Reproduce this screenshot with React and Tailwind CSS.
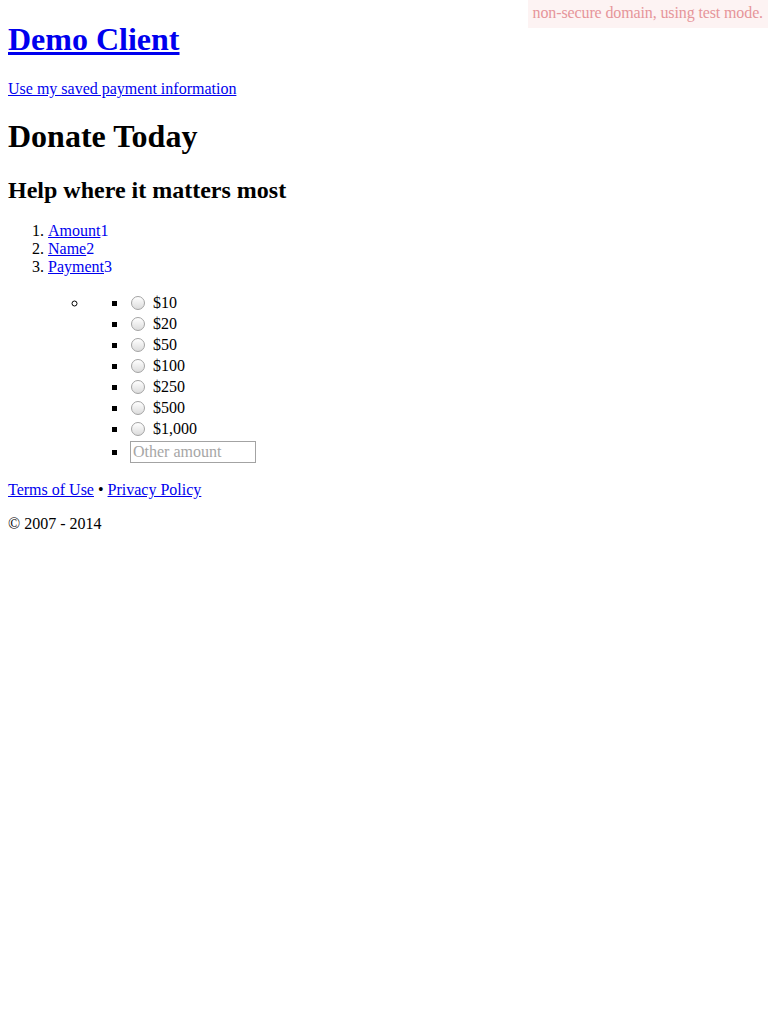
import React from "react";

const amounts = ["$10", "$20", "$50", "$100", "$250", "$500", "$1,000"];

function Radio() {
  return (
    <input
      type="radio"
      name="amount"
      className="appearance-none w-[14px] h-[14px] rounded-full border border-[#a3a3a3] bg-[linear-gradient(180deg,#ffffff,#dcdcdc)] mt-0 mr-[8px] ml-[3px] mb-0 align-[-2px] inline-block"
    />
  );
}

export default function App() {
  return (
    <div className="relative flow-root min-h-[1024px] bg-white text-black text-[16px] leading-[normal] font-['Liberation_Serif','Times_New_Roman',serif]">
      <div className="absolute top-0 right-0 bg-[#fdf3f3] text-[#e6959a] tracking-[-0.12px] pl-[5px] pr-[5px] pt-[4px] pb-[6px]">
        non-secure domain, using test mode.
      </div>
      <div className="mx-2">
        <h1 className="text-[32px] font-bold mt-[21.44px] mb-0">
          <a href="#" className="text-[#0000ee] underline">Demo Client</a>
        </h1>
        <p className="mt-[21.44px] mb-0">
          <a href="#" className="text-[#0000ee] underline">Use my saved payment information</a>
        </p>
        <h1 className="text-[32px] font-bold mt-[20.4px] mb-0">Donate Today</h1>
        <h2 className="text-[24px] font-bold mt-[21.5px] mb-0">Help where it matters most</h2>
        <ol className="list-decimal pl-10 mt-[17.9px] mb-0">
          <li>
            <a href="#" className="text-[#0000ee] underline">Amount</a>
            <span className="text-[#0000ee]">1</span>
          </li>
          <li>
            <a href="#" className="text-[#0000ee] underline">Name</a>
            <span className="text-[#0000ee]">2</span>
          </li>
          <li>
            <a href="#" className="text-[#0000ee] underline">Payment</a>
            <span className="text-[#0000ee]">3</span>
          </li>
        </ol>
        <div className="pl-10 mt-[16px] mb-0">
          <ul className="list-[circle] pl-10">
            <li className="leading-[21px]">
              <ul className="list-[square] pl-10">
                {amounts.map((a) => (
                  <li key={a} className="h-[21px] leading-[21px]">
                    <label>
                      <Radio />
                      {a}
                    </label>
                  </li>
                ))}
                <li className="h-[26px] leading-[21px] pt-[2px]">
                  <input
                    type="text"
                    placeholder="Other amount"
                    className="ml-[2px] w-[126px] h-[22px] align-top border border-[#a3a3a3] px-[2px] leading-[normal] placeholder:text-[#a6a6a6] outline-none"
                  />
                </li>
              </ul>
            </li>
          </ul>
        </div>
        <p className="mt-[16px] mb-0">
          <a href="#" className="text-[#0000ee] underline">Terms of Use</a>
          {" \u2022 "}
          <a href="#" className="text-[#0000ee] underline">Privacy Policy</a>
        </p>
        <p className="mt-[16px] mb-0">© 2007 - 2014</p>
      </div>
    </div>
  );
}
